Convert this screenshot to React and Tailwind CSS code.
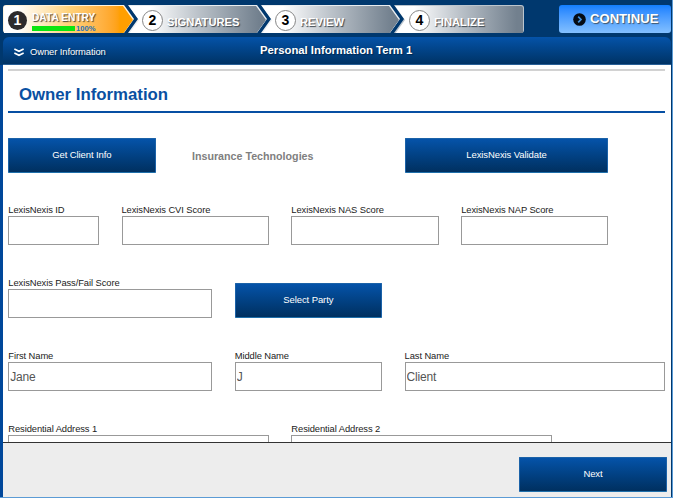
const font = "font-['Liberation_Sans',Arial,sans-serif]";

function Step({ n, label, labelClass = "", className, clip, fill, circle, circleMargin, children }) {
  return (
    <div className={`h-[28px] shrink-0 ${className} ${clip}`}>
      <div className={`flex h-full items-center ${clip} ${fill}`}>
        <span
          className={`flex shrink-0 items-center justify-center rounded-full leading-none font-bold ${circleMargin} ${circle}`}
        >
          {n}
        </span>
        {children || (
          <span className={`mt-[3px] ml-[4px] text-[11.2px] leading-[14px] font-bold whitespace-nowrap text-white [text-shadow:1px_1px_1px_#3c464f] ${labelClass}`}>
            {label}
          </span>
        )}
      </div>
    </div>
  );
}

function Button({ children, className }) {
  return (
    <button
      className={`h-[35px] rounded-[1px] border border-x-[#1b62a8] border-t-[#1b62a8] border-b-[#1f70ab] bg-linear-to-b from-[#0553a9] to-[#003060] text-[9.5px] tracking-[-0.1px] text-white ${className}`}
    >
      {children}
    </button>
  );
}

function Field({ label, value = "", className }) {
  return (
    <label className={`block ${className}`}>
      <span className="block h-[12px] text-[9.4px] leading-[12px] tracking-[-0.09px] whitespace-nowrap text-[#222]">{label}</span>
      <input
        readOnly
        value={value}
        className="block h-[29px] w-full rounded-none border border-[#999] bg-white pt-px pr-[2px] pl-px text-[12px] tracking-[-0.2px] text-[#555] outline-none"
      />
    </label>
  );
}

const midClip = "[clip-path:polygon(0_0,calc(100%-10px)_0,100%_50%,calc(100%-10px)_100%,0_100%,10px_50%)]";
const darkCircle = "h-[19px] w-[19px] bg-[#2d2b2c] text-[14px] text-white";
const lightCircle = "h-[21px] w-[21px] border-[1.5px] border-[#858585] bg-white text-[14px] text-black";
const greyFill = "m-px h-[26px] bg-linear-to-r from-white from-15% via-[#bcc3ca] via-50% to-[#72808e] to-95%";

export default function App() {
  return (
    <div className={`h-[500px] w-[673px] overflow-hidden bg-white ${font}`}>
      <div className="flex h-[498px] flex-col border-r border-b border-[#5b9bd5] bg-[#00386e]">
        <header className="flex h-[37px] shrink-0 items-start pt-[5px] pl-[3px]">
          <Step
            n="1"
            className="w-[131px] rounded-l-[3px] bg-[#fff3dc]"
            clip="[clip-path:polygon(0_0,calc(100%-10px)_0,100%_50%,calc(100%-10px)_100%,0_100%)]"
            fill="m-px h-[26px] bg-linear-to-r from-white from-10% via-[#ffd27a] via-50% to-[#ff9f00] to-90%"
            circle={darkCircle}
            circleMargin="ml-[4px]"
          >
            <div className="ml-[5px] pt-[4px]">
              <div className="text-[10.2px] leading-[11px] font-bold whitespace-nowrap text-white [text-shadow:1px_1px_1px_#4d4538]">
                DATA ENTRY
              </div>
              <div className="flex items-center">
                <div className="mt-[2px] h-[5px] w-[43px] bg-[#0be510]" />
                <span className="mt-[2px] ml-px text-[7.6px] leading-[7px] font-bold text-[#2671b9]">100%</span>
              </div>
            </div>
          </Step>
          <Step n="2" label="SIGNATURES" className="-ml-[6px] w-[139px] bg-[#e9edf0]" clip={midClip} fill={greyFill} circle={lightCircle} circleMargin="ml-[13px]" />
          <Step n="3" label="REVIEW" className="-ml-[6px] w-[139px] bg-[#e9edf0]" clip={midClip} fill={greyFill} circle={lightCircle} circleMargin="ml-[13px]" />
          <Step
            n="4"
            label="FINALIZE"
            className="-ml-[6px] w-[130px] rounded-r-[3px] bg-[#bcc5cd]"
            clip="[clip-path:polygon(0_0,100%_0,100%_100%,0_100%,10px_50%)]"
            fill={`${greyFill} rounded-r-[2px]`}
            circle={lightCircle}
            circleMargin="ml-[14px]"
          />
          <button className="ml-[35px] flex h-[28px] w-[112px] items-center rounded-[3px] bg-linear-to-b from-[#107fff] to-[#83c0ff] pl-[14px] text-[13.1px] font-bold text-white [text-shadow:1px_1px_1px_#41566a]">
            <svg viewBox="0 0 13 13" className="mr-[4px] h-[13px] w-[13px] shrink-0">
              <circle cx="6.5" cy="6.5" r="6.3" fill="#050b14" />
              <path d="M5.2 3.6 8 6.5 5.2 9.4" fill="none" stroke="#3f8fdc" strokeWidth="1.7" />
            </svg>
            CONTINUE
          </button>
        </header>

        <div className="ml-[3px] grid h-[28px] w-[668px] shrink-0 grid-cols-[257px_auto] items-center rounded-t-[6px] border-b border-[#285f96] bg-linear-to-b from-[#0553a9] to-[#003365] text-white">
          <div className="flex items-center pt-[3px] pl-[11px] text-[9.4px] leading-[12px] tracking-[-0.08px]">
            <svg viewBox="0 0 10 9" className="mr-[6px] h-[9px] w-[10px]" fill="none" stroke="white" strokeWidth="1.8">
              <path d="M.3 1 5 3.2 9.7 1M.3 5 5 7.2 9.7 5" />
            </svg>
            <span className="[text-shadow:1px_1px_1px_#002850]">Owner Information</span>
          </div>
          <h1 className="mb-px text-[11.3px] leading-[14px] font-bold whitespace-nowrap [text-shadow:1px_1px_1px_#002850]">
            Personal Information Term 1
          </h1>
        </div>

        <div className="flex min-h-0 flex-1 flex-col border-r border-l-[3px] border-r-[#00386e] border-l-[#00479a]">
          <main className="h-[377px] shrink-0 overflow-hidden bg-white pr-[6px] pl-[5.3px]">
            <div className="mt-[4px] h-[2px] bg-[#d2d2d2]" />
            <h2 className="box-content flex h-[33px] items-center border-b-2 border-[#064fa3] pt-[7px] pl-[10.6px] text-[16.8px] font-bold text-[#0950a2]">
              Owner Information
            </h2>
            <div className="mt-[25px] grid grid-cols-12 grid-rows-[66px_73px_73px_73px] gap-x-[22.6px]">
              <Button className="col-span-3">Get Client Info</Button>
              <div className="col-span-3 pt-[11px] pl-[2px] text-center text-[10.7px] leading-[14px] font-bold whitespace-nowrap text-[#808080]">
                Insurance Technologies
              </div>
              <Button className="col-span-4 col-start-8">LexisNexis Validate</Button>

              <Field className="col-span-2 col-start-1" label="LexisNexis ID" />
              <Field className="col-span-3" label="LexisNexis CVI Score" />
              <Field className="col-span-3" label="LexisNexis NAS Score" />
              <Field className="col-span-3" label="LexisNexis NAP Score" />

              <Field className="col-span-4 col-start-1" label="LexisNexis Pass/Fail Score" />
              <Button className="col-span-3 mt-[6px]">Select Party</Button>

              <Field className="col-span-4 col-start-1" label="First Name" value="Jane" />
              <Field className="col-span-3" label="Middle Name" value="J" />
              <Field className="col-span-5" label="Last Name" value="Client" />

              <Field className="col-span-5 col-start-1" label="Residential Address 1" />
              <Field className="col-span-5" label="Residential Address 2" />
            </div>
          </main>
          <footer className="flex flex-1 justify-end border-t border-[#333] bg-[#ededed] pt-[14px] pr-[4px]">
            <Button className="w-[148px]">Next</Button>
          </footer>
        </div>
      </div>
    </div>
  );
}
